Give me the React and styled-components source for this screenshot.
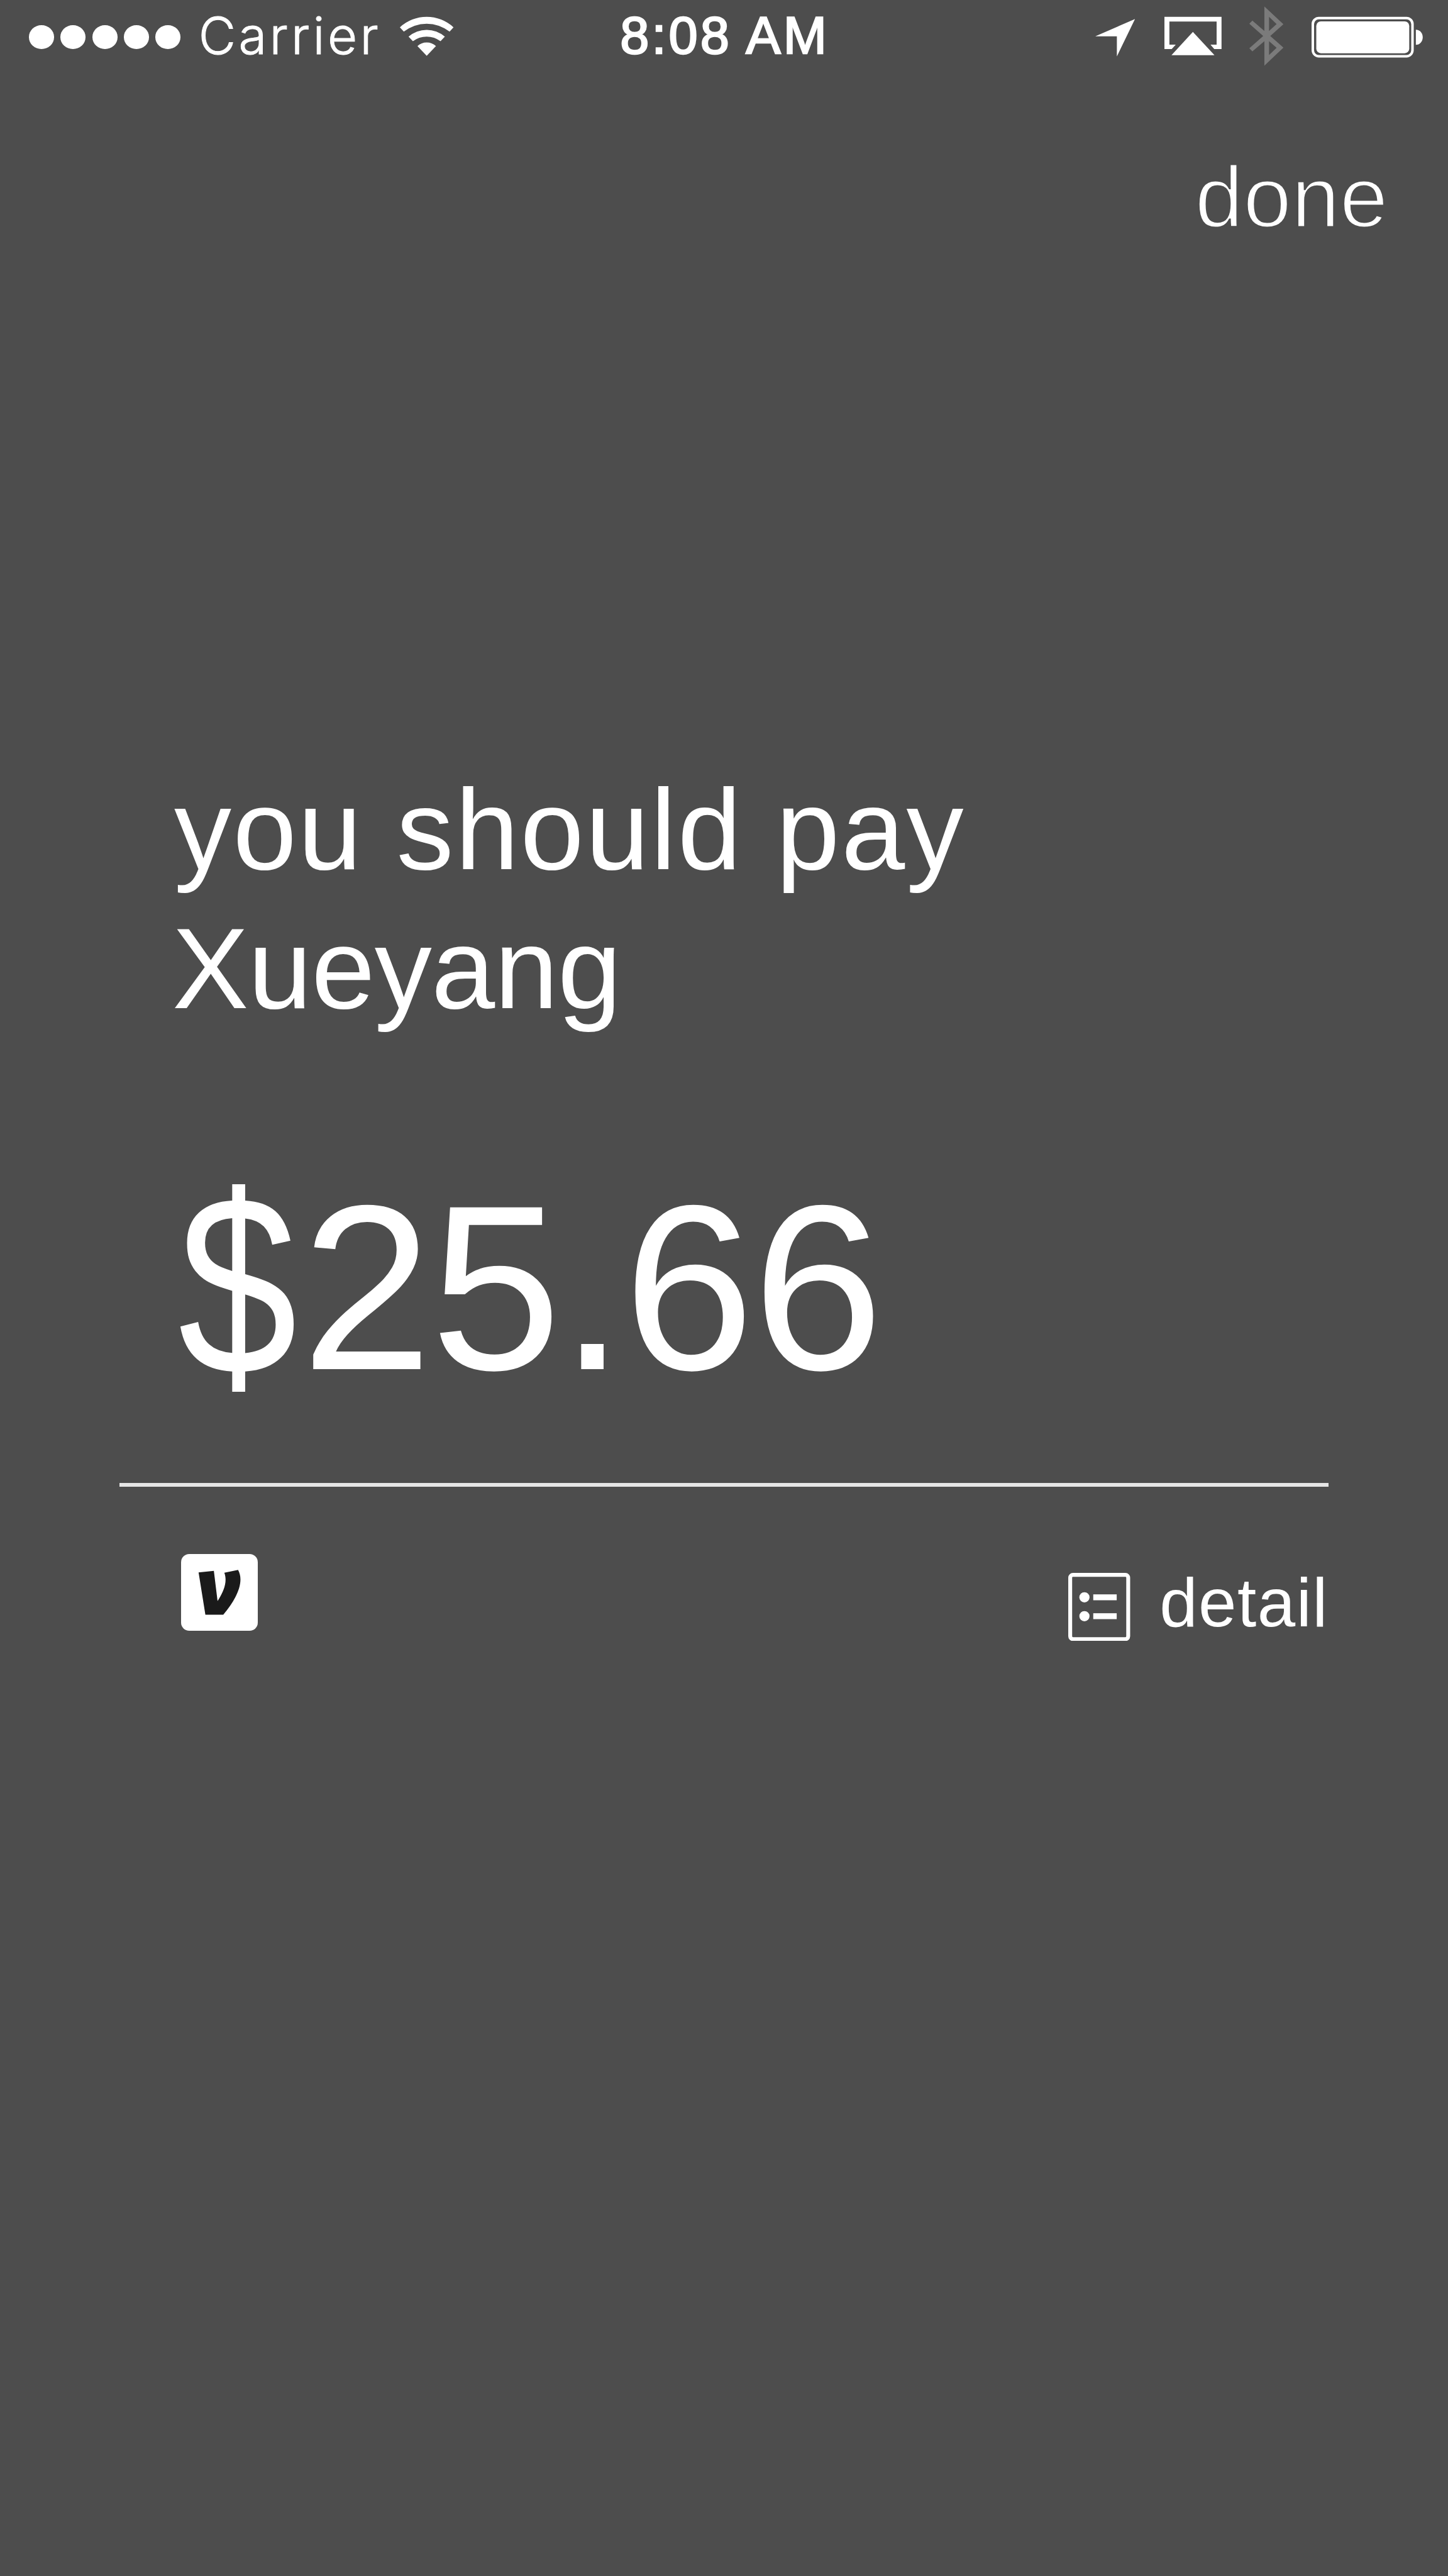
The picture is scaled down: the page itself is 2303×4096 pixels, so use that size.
import React from 'react';
import styled, { createGlobalStyle } from 'styled-components';

const GlobalStyle = createGlobalStyle`
  body {
    margin: 0;
    background-color: #4d4d4d;
  }
`;

const Screen = styled.div`
  width: 2303px;
  height: 4096px;
  overflow: hidden;
  display: flex;
  flex-direction: column;
  background-color: #4d4d4d;
  color: white;
  font-family: 'Liberation Sans', Arial, sans-serif;
`;

/* ---------- status bar ---------- */

const StatusBar = styled.header`
  height: 112.8px;
  flex-shrink: 0;
  display: grid;
  grid-template-columns: 940.4px auto 1fr;
  padding: 0 40.4px 0 45.9px;
`;

const StatusGroup = styled.div`
  display: flex;
  align-items: center;
  justify-content: ${(props) => (props.$end ? 'flex-end' : 'flex-start')};
`;

const Signal = styled.div`
  display: flex;
  gap: 10.5px;
  padding-top: 5.6px;
`;

const Dot = styled.span`
  width: 39.9px;
  height: 37.5px;
  border-radius: 50%;
  background-color: white;
`;

const Carrier = styled.span`
  margin-left: 28.5px;
  font-family: Inter, sans-serif;
  font-size: 81.4px;
  font-weight: 300;
  line-height: 1;
  letter-spacing: 4.4px;
  -webkit-text-stroke: 1px white;
`;

const Clock = styled.span`
  font-size: 83px;
  line-height: 1;
  letter-spacing: 4px;
  white-space: nowrap;
  -webkit-text-stroke: 2.5px white;
`;

const StatusIcon = styled.svg`
  display: block;
  flex-shrink: 0;
  width: ${(props) => props.$width}px;
  height: 112.8px;
  margin-left: ${(props) => props.$gap || 0}px;
  fill: ${(props) => (props.$dim ? '#7b7b7b' : 'white')};
`;

/* ---------- navigation ---------- */

const NavRow = styled.nav`
  display: flex;
  justify-content: flex-end;
  margin-top: 131.5px;
  padding-right: 95.6px;
`;

const DoneButton = styled.button`
  padding: 0;
  border: none;
  background: transparent;
  color: white;
  font-family: inherit;
  font-size: 138px;
  line-height: 138px;
  cursor: pointer;
  -webkit-text-stroke: 3px #4d4d4d; /* thins the letters to a light weight */
`;

/* ---------- payment ---------- */

const Payment = styled.main`
  margin: 826.6px 190px 0;
  display: flex;
  flex-direction: column;
`;

const Message = styled.h1`
  margin: 0;
  padding-left: 87px;
  display: flex;
  flex-direction: column;
  font-size: 182px;
  font-weight: 400;
  line-height: 221.1px;
`;

const MessageLine = styled.span`
  white-space: nowrap;
  letter-spacing: ${(props) => props.$spacing || 0}px;
  margin-left: ${(props) => props.$shift || 0}px;
`;

const Amount = styled.p`
  margin: 208.6px 0 0;
  padding-left: 89px;
  font-size: 374px;
  line-height: 374px;
  letter-spacing: -2.6px;
`;

/* narrower and taller than the digits */
const Currency = styled.span`
  display: inline-block;
  margin-right: -5px;
  transform: translate(-5px, -4px) scale(0.91, 1.09);
`;

const Divider = styled.hr`
  width: 100%;
  height: 6px;
  margin: 124.3px 0 0;
  border: none;
  background-color: #e6e6e6;
`;

const Actions = styled.div`
  display: flex;
  align-items: flex-start;
  justify-content: space-between;
  padding-left: 98.2px;
`;

const VenmoButton = styled.button`
  width: 121.7px;
  height: 121.7px;
  margin-top: 107px;
  padding: 0;
  border: none;
  border-radius: 13px;
  background-color: white;
  cursor: pointer;

  svg {
    display: block;
    width: 100%;
    height: 100%;
    fill: #1a1a1a;
  }
`;

const DetailLink = styled.a`
  display: flex;
  align-items: flex-start;
  gap: 46.5px;
  margin-top: 130.8px;
  font-size: 108.7px;
  line-height: 108.7px;
  letter-spacing: 1.5px;
  cursor: pointer;

  svg {
    display: block;
    width: 98.5px;
    height: 108.4px;
    margin-top: 6.2px;
  }
`;

function WifiIcon() {
  return (
    <StatusIcon $width={85.3} $gap={30.2} viewBox="863.8 0 115.8 153">
      <path d="M863.8 59A85.2 85.2 0 0 1 979.6 59L971.1 68.3A79.5 79.5 0 0 0 872.3 68.3Z" />
      <path d="M882.5 79A59.6 59.6 0 0 1 960.9 79L951.5 89A49.4 49.4 0 0 0 891.9 89Z" />
      <path d="M901.7 99.3A30 30 0 0 1 941.7 99.3L921.7 120.3Z" />
    </StatusIcon>
  );
}

function LocationIcon() {
  return (
    <StatusIcon $width={63.2} viewBox="2364.5 0 85.7 153">
      <path d="M2364.5 78.3L2450.2 41L2411.1 121.7V78.3Z" />
    </StatusIcon>
  );
}

function AirPlayIcon() {
  return (
    <StatusIcon $width={90.8} $gap={46.3} viewBox="2513 0 123.2 153">
      <path d="M2513 36.3H2636.2V105.7H2620.5L2612.4 96.3H2625.6V46.3H2523.7V96.3H2537.4L2528.7 105.7H2513Z" />
      <path d="M2574.4 68.7L2621 119H2528.2Z" />
    </StatusIcon>
  );
}

function BluetoothIcon() {
  return (
    <StatusIcon $width={54.3} $gap={44.1} $dim viewBox="2696 0 73.7 153">
      <path
        fillRule="evenodd"
        d="M2728.5 14L2769.6 52.3L2741.2 77.5L2769.6 102.7L2728.5 141.7V88.7L2702.6 111L2696 104L2726 77.7L2696 51.3L2702.6 44.3L2728.5 66.7Z
          M2738.6 36.3V66.7L2754.9 52Z
          M2738.6 88.7V118.7L2754.9 103Z"
      />
    </StatusIcon>
  );
}

function BatteryIcon() {
  return (
    <StatusIcon $width={176.8} $gap={44.8} viewBox="2830.4 0 239.9 153">
      <rect x="2833.1" y="38.9" width="215.1" height="82.4" rx="13" fill="none" stroke="white" strokeWidth="5.4" />
      <rect x="2840.6" y="46" width="200.6" height="69" rx="10" />
      <path d="M3055.5 64C3064 64 3070.3 71 3070.3 80.3S3064 96.7 3055.5 96.7Z" />
    </StatusIcon>
  );
}

function VenmoLogo() {
  return (
    <svg viewBox="93 98 495 496">
      <path d="M206 217L305 207L329 403C365 347 396 281 373 219L462 201C498 265 473 364 366 491H250Z" />
    </svg>
  );
}

function DetailIcon() {
  return (
    <svg viewBox="2305.7 3393.7 133.3 147" fill="white">
      <rect x="2309.8" y="3397.9" width="125.1" height="138.6" rx="6" fill="none" stroke="white" strokeWidth="8.4" />
      <circle cx="2340.5" cy="3446.3" r="11" />
      <circle cx="2340.5" cy="3487" r="11" />
      <rect x="2359.5" y="3440" width="50.6" height="12.7" />
      <rect x="2359.5" y="3480.7" width="50.6" height="12.7" />
    </svg>
  );
}

export default function App() {
  return (
    <>
      <GlobalStyle />
      <Screen>
        <StatusBar>
          <StatusGroup>
            <Signal>
              {[1, 2, 3, 4, 5].map((bar) => (
                <Dot key={bar} />
              ))}
            </Signal>
            <Carrier>Carrier</Carrier>
            <WifiIcon />
          </StatusGroup>
          <StatusGroup>
            <Clock>8:08 AM</Clock>
          </StatusGroup>
          <StatusGroup $end>
            <LocationIcon />
            <AirPlayIcon />
            <BluetoothIcon />
            <BatteryIcon />
          </StatusGroup>
        </StatusBar>

        <NavRow>
          <DoneButton>done</DoneButton>
        </NavRow>

        <Payment>
          <Message>
            <MessageLine $spacing={2.4}>you should pay</MessageLine>
            <MessageLine $spacing={-0.7} $shift={-3}>Xueyang</MessageLine>
          </Message>
          <Amount>
            <Currency>$</Currency>25.66
          </Amount>
          <Divider />
          <Actions>
            <VenmoButton aria-label="Venmo">
              <VenmoLogo />
            </VenmoButton>
            <DetailLink>
              <DetailIcon />
              detail
            </DetailLink>
          </Actions>
        </Payment>
      </Screen>
    </>
  );
}
